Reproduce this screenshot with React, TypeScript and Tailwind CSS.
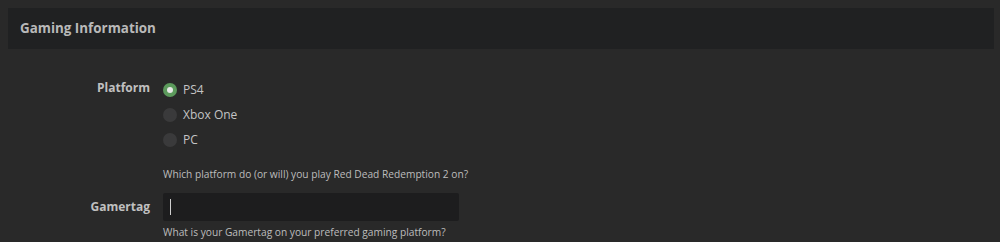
import React from "react";

const platforms = ["PS4", "Xbox One", "PC"];

function Radio({ label, checked }: { label: string; checked?: boolean }) {
    return (
        <label className="flex items-center h-[25px] gap-[6px]">
            {checked ? (
                <span className="w-[14px] h-[14px] rounded-full bg-[#5c9a5c] flex items-center justify-center">
                    <span className="w-[6px] h-[6px] rounded-full bg-[#e8e8e8]" />
                </span>
            ) : (
                <span className="w-[14px] h-[14px] rounded-full bg-[#3a3a3b]" />
            )}
            <span className="text-[12px] text-[#c4c4c4]">{label}</span>
        </label>
    );
}

export default function App() {
    return (
        <div className="w-[1000px] h-[242px] bg-[#292929] p-[8px] overflow-hidden font-['Open_Sans',sans-serif]">
            <div className="h-[41px] w-[986px] bg-[#202122] flex items-center px-[12px]">
                <h2 className="text-[13.4px] font-bold text-[#b9b9b9]">Gaming Information</h2>
            </div>

            <div className="mt-[28px]">
                <div className="flex">
                    <div className="w-[155px] pr-[13px] text-right text-[12px] font-bold text-[#c0c0c0] leading-[25px] -mt-[2px]">
                        Platform
                    </div>
                    <div className="flex flex-col">
                        {platforms.map((p, i) => (
                            <Radio key={p} label={p} checked={i === 0} />
                        ))}
                        <p className="text-[10.2px] text-[#bdbdbd] mt-[15px]">
                            Which platform do (or will) you play Red Dead Redemption 2 on?
                        </p>
                    </div>
                </div>

                <div className="flex mt-[11px]">
                    <div className="w-[155px] pr-[13px] text-right text-[12px] font-bold text-[#c0c0c0] leading-[28px]">
                        Gamertag
                    </div>
                    <div className="flex flex-col">
                        <div className="w-[296px] h-[28px] bg-[#1d1d1e] rounded-[2px] flex items-center px-[7px]">
                            <span className="w-px h-[16px] bg-[#cfcfcf]" />
                        </div>
                        <p className="text-[10.2px] text-[#bdbdbd] mt-[4px]">
                            What is your Gamertag on your preferred gaming platform?
                        </p>
                    </div>
                </div>
            </div>
        </div>
    );
}
